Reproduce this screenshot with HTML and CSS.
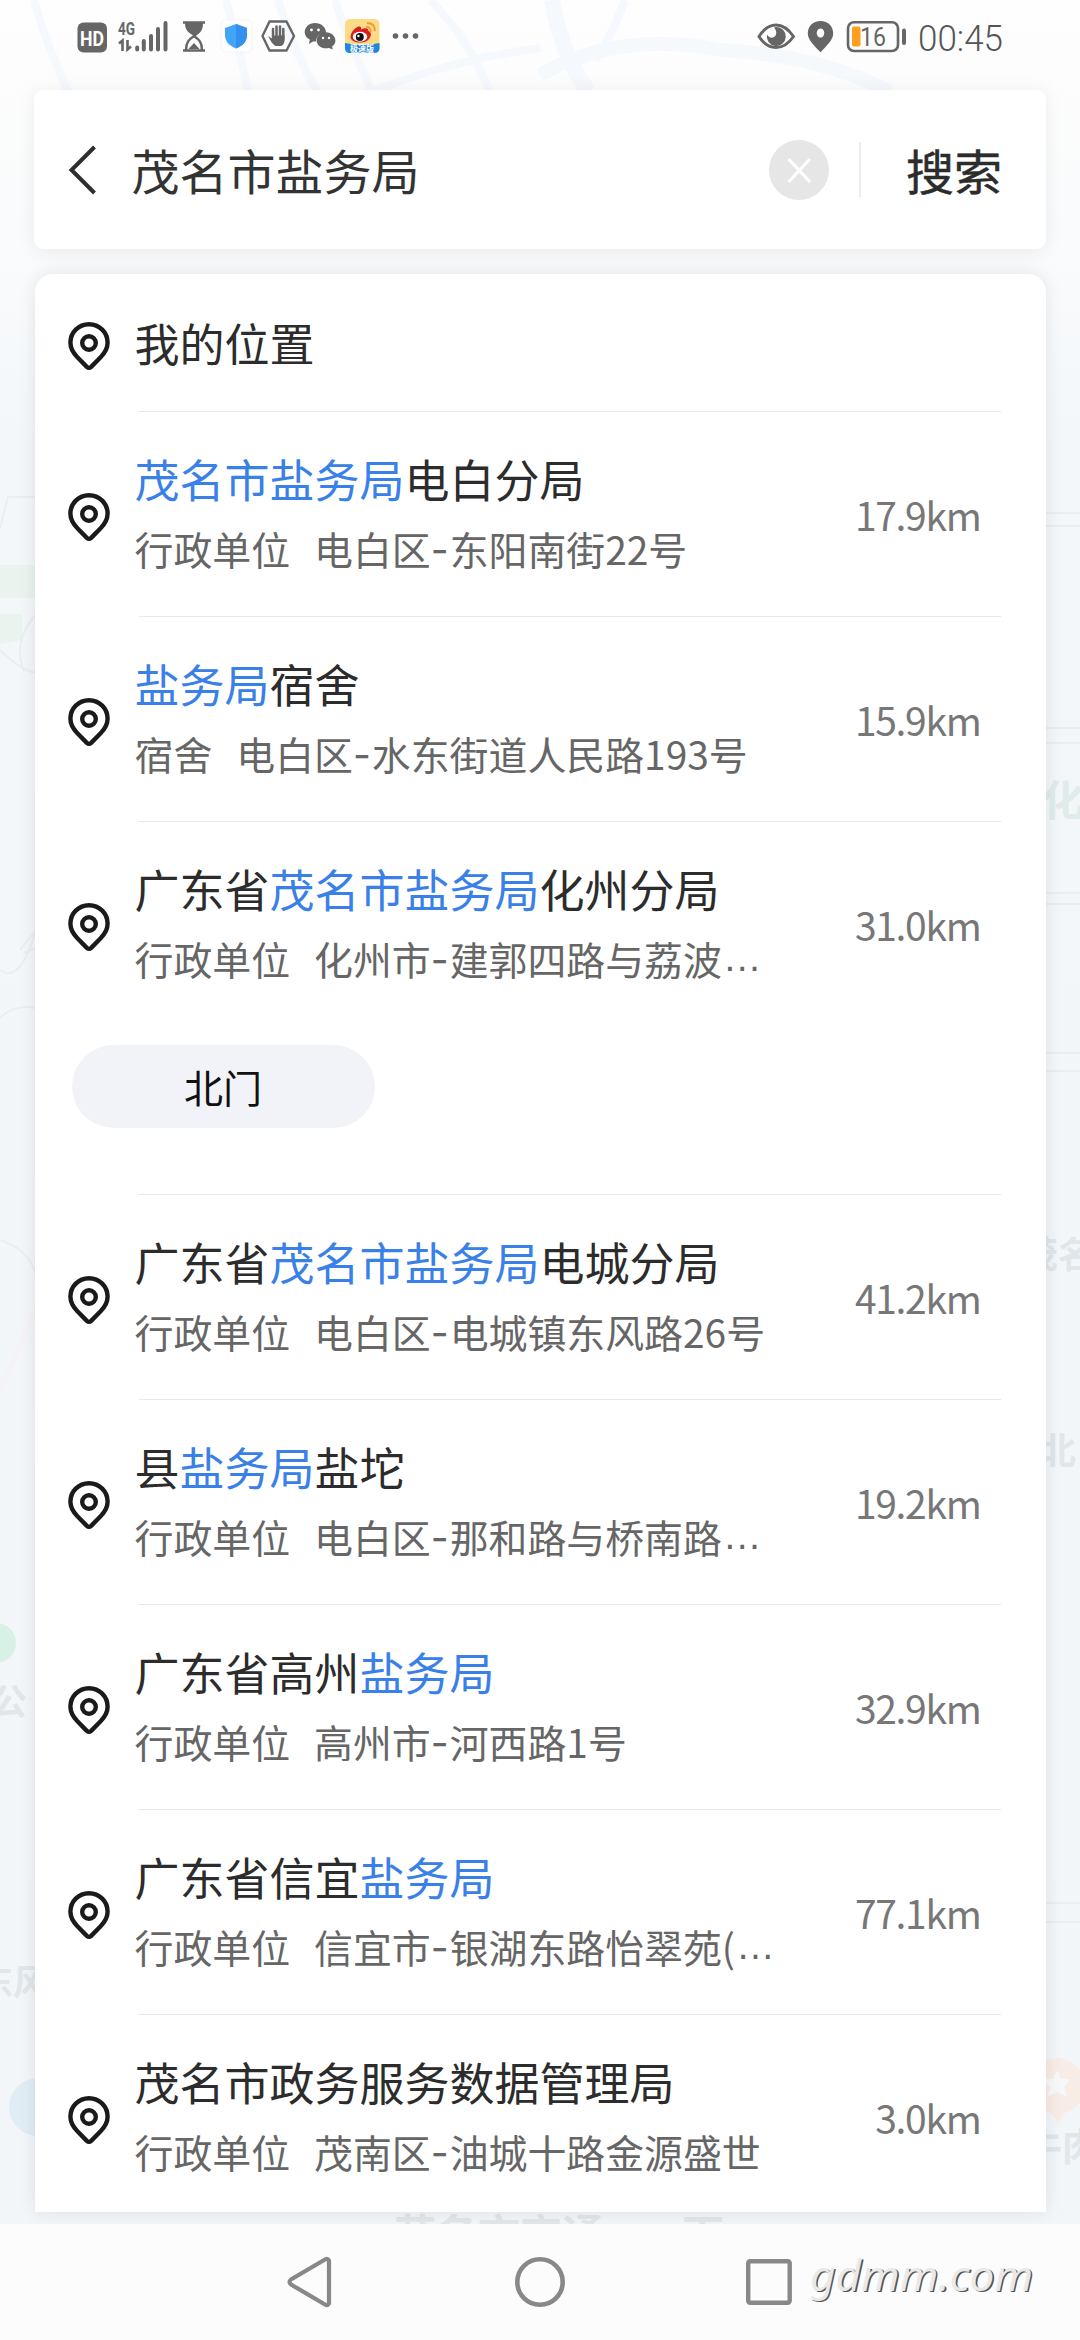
FILE: index.html
```html
<!DOCTYPE html>
<html lang="zh-CN">
<head>
<meta charset="utf-8">
<title>搜索</title>
<link rel="stylesheet" href="styles.css">
</head>
<body>
<svg width="0" height="0" class="defs">
  <symbol id="pin" viewBox="0 0 44 52">
    <path d="M22 3.200C32.500 3.200 40.600 11.400 40.600 21.600c0 6.200-2.700 10.400-7 14.600L24.200 45.800q-2.200 2-4.400 0L10.400 36.200C6.100 32 3.400 27.800 3.400 21.600 3.400 11.400 11.500 3.200 22 3.200z" fill="none" stroke="#1a1a1a" stroke-width="4.400"/>
    <circle cx="22" cy="22" r="6.800" fill="none" stroke="#1a1a1a" stroke-width="4.400"/>
  </symbol>
</svg>
<div class="screen">
  <svg class="map" viewBox="0 0 1080 2224" width="1080" height="2224">
    <defs>
      <linearGradient id="fade" x1="0" y1="0" x2="0" y2="1">
        <stop offset="0" stop-color="#fefefe"/><stop offset=".1" stop-color="#fafbfc"/><stop offset=".2" stop-color="#f3f7fa"/><stop offset="1" stop-color="#f2f6f9"/>
      </linearGradient>
    </defs>
    <rect width="1080" height="2224" fill="url(#fade)"/>
    <g fill="none" stroke="#f5f8fc" stroke-width="8">
      <path d="M34 0Q45 40 68 92"/><path d="M226 0Q240 50 248 92"/><path d="M278 0Q295 55 318 92"/><path d="M335 0Q350 45 372 92"/>
      <path d="M430 0Q470 40 490 92"/><path d="M372 92Q450 60 540 48"/>
      <path d="M540 75Q620 30 720 50Q820 55 890 92" stroke-width="14"/><path d="M552 0Q560 50 588 92" stroke-width="16"/><path d="M625 0Q610 40 595 60"/>
    </g>
    <path d="M0 565H36V598H0zM0 614H22V640L0 644z" fill="#e9f4ef"/>
    <g fill="none" stroke="#e9eef1" stroke-width="2">
      <path d="M0 528L8 497H36M0 650Q20 670 36 673M36 615Q12 640 24 672M0 970Q20 985 36 930M0 1018Q14 1004 36 1008M0 1240Q30 1250 36 1275"/>
      <path d="M20 950L36 930M24 953L36 948"/>
      <path d="M1044 513H1080M1044 526H1080M1044 728H1080M1044 743H1080M1044 893H1080M1044 904H1080M1044 1053H1080M1044 1071H1080M1044 1903H1080M1044 1922H1080"/>
    </g>
    <path d="M0 1390L36 1310" stroke="#f5f3f6" stroke-width="6"/>
    <circle cx="-4" cy="1643" r="20" fill="#d9f0e6"/>
    <circle cx="38" cy="2107" r="29" fill="#e0edf5"/>
    <circle cx="1057" cy="2086" r="28" fill="#f8ece7"/><path d="M1046 2108L1058 2122L1069 2108z" fill="#f8ece7"/>
    <path d="M1057 2070l4 9h9l-6 8 3 10-10-5-10 5 3-10-6-8h9z" fill="#f6f8fa"/>
    <g class="labels">
      <text x="-9" y="1715" font-size="36">公</text>
      <text x="-22" y="1995" font-size="35">东风</text>
      <text x="1042" y="816" font-size="42" fill="#dfece9">化</text>
      <text x="1022" y="1268" font-size="36">茂名</text>
      <text x="1040" y="1464" font-size="36">北</text>
      <text x="1024" y="2160" font-size="38">牛肉</text>
      <text x="394" y="2250" font-size="42">茂名市交通</text>
      <text x="682" y="2250" font-size="42">下</text>
    </g>
  </svg>

  <header class="status">
    <svg width="440" height="72" viewBox="0 0 440 72">
      <rect x="77.500" y="22.500" width="29.500" height="30" rx="6" fill="#666"/>
      <text x="80" y="45.500" class="s-hd" textLength="24" lengthAdjust="spacingAndGlyphs">HD</text>
      <text x="118" y="34.500" class="s-4g" textLength="17" lengthAdjust="spacingAndGlyphs">4G</text>
      <path d="M119 43.500l3.500-3V51M127.500 40v9.500l3.500-3" fill="none" stroke="#666" stroke-width="2.600"/>
      <path d="M137.200 47.500V49.500M143.800 41V49.500M151 36V49.500M158 29V49.500M165.500 23V49.500" stroke="#666" stroke-width="4" stroke-linecap="round"/>
      <path d="M183 22.500h22M183 50.500h22" stroke="#666" stroke-width="2.600"/>
      <path d="M185 23h18c0 8-3 10-8 13.500C189 33 185 31 185 23z" fill="#666"/>
      <path d="M186 50c0-8 3-10.500 8-14 5 3.500 8 6 8 14" fill="none" stroke="#666" stroke-width="2.400"/>
      <path d="M188.500 49l5.500-6 5.500 6z" fill="#666"/>
      <rect x="221" y="20" width="31" height="32" rx="5" fill="#fff" stroke="#f3f3f3"/>
      <path d="M236 24l11 4v7c0 7-5 11-11 13.500C230 46 225 42 225 35v-7z" fill="#43a5f8"/><path d="M236 24l11 4v7c0 7-5 11-11 13.500z" fill="#3390ee"/>
      <path d="M269.500 21.500h17l7.500 14.500-7.500 14.500h-17L262.500 36z" fill="none" stroke="#666" stroke-width="2.400" stroke-linejoin="round"/>
      <path d="M273 29v8M276.500 26.500v10M280 26.500v10M283.300 29v10" stroke="#666" stroke-width="2.500" stroke-linecap="round"/>
      <path d="M268 36l4 2.500v-3h12.600v4c0 4-2 6.500-4 6.500h-5c-2.500-1-5.500-6-7.600-10z" fill="#666"/>
      <path d="M315 23c6 0 11 4.300 11 9.200 0 .3 0 .5-.1.800-6 0-10 4-10 8.400h-3L309 44l.8-4.500C306.500 38 304.700 35 304.700 32.200 304.700 27.300 309 23 315 23z" fill="#666"/>
      <path d="M326 32.200c5.300 0 9.400 3.700 9.400 8.200 0 2.500-1.300 4.500-3.200 6l.5 3-3.600-1.500c-1 .3-2 .4-3.100.4-5.300 0-9.400-3.500-9.400-7.900s4.100-8.200 9.400-8.200z" fill="#666"/>
      <g fill="#fff"><circle cx="311.500" cy="30" r="1.400"/><circle cx="318.500" cy="30" r="1.400"/><circle cx="323" cy="38" r="1.200"/><circle cx="329" cy="38" r="1.200"/></g>
      <rect x="345" y="19" width="34.500" height="34" rx="5" fill="#fbdb85"/>
      <path d="M345 43q17 4 34.500 0v5q0 5-5 5H350q-5 0-5-5z" fill="#1f86e0"/>
      <path d="M350.500 37c0-5 5-9.500 8-10.500 2.500-.5 3 1 2.500 3 4-2 7.500-2 7.500 1.500 3 1.500 3 4 1.500 6.500-2 4-6 5-10 5-5 0-9.500-2-9.500-5.500z" fill="#d81e1e"/>
      <ellipse cx="360" cy="36.800" rx="7.200" ry="5" fill="#fff"/><circle cx="359.800" cy="37" r="4" fill="#111"/><circle cx="358.400" cy="36" r="1.200" fill="#fff"/>
      <path d="M366 27q4-1 5 5M367 23q8 0 8 8" fill="none" stroke="#ee9c35" stroke-width="1.800"/>
      <text x="350" y="51.500" class="s-app" textLength="24" lengthAdjust="spacingAndGlyphs">极速版</text>
      <g fill="#666"><circle cx="395.500" cy="36" r="2.800"/><circle cx="405.500" cy="36" r="2.800"/><circle cx="415.500" cy="36" r="2.800"/></g>
    </svg>
    <svg width="330" height="72" viewBox="750 0 330 72">
      <path d="M759 36.500C764 28.500 770 25 776 25s12 3.500 17.500 11.500C788 44.500 782 47.500 776 47.500S764 44.500 759 36.500z" fill="none" stroke="#666" stroke-width="3"/>
      <path d="M776 27a9.500 9.500 0 1 1-9 7.500c1.500 3 4.500 4 7 2.500 3-2 3-6 0-9.500q1-.5 2-.5z" fill="#666"/>
      <path d="M820.500 21c7.500 0 12.700 5.400 12.700 12.300 0 7.200-7 12.700-12.700 19-5.700-6.300-12.700-11.800-12.700-19C807.800 26.400 813 21 820.500 21zM820.500 28.500a3.800 4.500 0 1 0 .01 0z" fill="#666" fill-rule="evenodd"/>
      <rect x="848" y="22.200" width="50" height="28.800" rx="6" fill="none" stroke="#666" stroke-width="2.600"/>
      <rect x="852" y="26.500" width="8.500" height="20" rx="2" fill="#ff9d1c"/>
      <text x="860" y="46" class="s-bat" textLength="26" lengthAdjust="spacingAndGlyphs">16</text>
      <rect x="902" y="28.500" width="4" height="16.500" rx="2" fill="#666"/>
      <text x="918" y="50.500" class="s-time" textLength="85" lengthAdjust="spacingAndGlyphs">00:45</text>
    </svg>
  </header>

  <div class="search">
    <svg class="back" width="30" height="52" viewBox="0 0 30 52"><path d="M26.500 3L3.500 26l23 23" fill="none" stroke="#2e2e2e" stroke-width="4"/></svg>
    <div class="query">茂名市盐务局</div>
    <svg class="clear" width="60" height="60" viewBox="0 0 60 60"><circle cx="30" cy="30" r="30" fill="#e6e6e6"/><path d="M19.500 19l21.500 23M41 19L19.500 42" stroke="#fff" stroke-width="3.200"/></svg>
    <i class="sep"></i>
    <div class="go">搜索</div>
  </div>

  <main class="list">
    <section class="row first"><svg class="pin"><use href="#pin"/></svg><div class="info"><div class="name">我的位置</div></div></section>
    <section class="row"><svg class="pin"><use href="#pin"/></svg><div class="info"><div class="name"><b>茂名市盐务局</b>电白分局</div><div class="addr"><span class="kind">行政单位</span>电白区<i>-</i>东阳南街22号</div></div><div class="dist">17.9km</div></section>
    <section class="row"><svg class="pin"><use href="#pin"/></svg><div class="info"><div class="name"><b>盐务局</b>宿舍</div><div class="addr"><span class="kind">宿舍</span>电白区<i>-</i>水东街道人民路193号</div></div><div class="dist">15.9km</div></section>
    <section class="row"><svg class="pin"><use href="#pin"/></svg><div class="info"><div class="name">广东省<b>茂名市盐务局</b>化州分局</div><div class="addr"><span class="kind">行政单位</span>化州市<i>-</i>建郭四路与荔波<em>…</em></div></div><div class="dist">31.0km</div></section>
    <div class="chips"><span class="chip">北门</span></div>
    <section class="row"><svg class="pin"><use href="#pin"/></svg><div class="info"><div class="name">广东省<b>茂名市盐务局</b>电城分局</div><div class="addr"><span class="kind">行政单位</span>电白区<i>-</i>电城镇东风路26号</div></div><div class="dist">41.2km</div></section>
    <section class="row"><svg class="pin"><use href="#pin"/></svg><div class="info"><div class="name">县<b>盐务局</b>盐坨</div><div class="addr"><span class="kind">行政单位</span>电白区<i>-</i>那和路与桥南路<em>…</em></div></div><div class="dist">19.2km</div></section>
    <section class="row"><svg class="pin"><use href="#pin"/></svg><div class="info"><div class="name">广东省高州<b>盐务局</b></div><div class="addr"><span class="kind">行政单位</span>高州市<i>-</i>河西路1号</div></div><div class="dist">32.9km</div></section>
    <section class="row"><svg class="pin"><use href="#pin"/></svg><div class="info"><div class="name">广东省信宜<b>盐务局</b></div><div class="addr"><span class="kind">行政单位</span>信宜市<i>-</i>银湖东路怡翠苑(<em>…</em></div></div><div class="dist">77.1km</div></section>
    <section class="row"><svg class="pin"><use href="#pin"/></svg><div class="info"><div class="name">茂名市政务服务数据管理局</div><div class="addr"><span class="kind">行政单位</span>茂南区<i>-</i>油城十路金源盛世</div></div><div class="dist">3.0km</div></section>
  </main>

  <footer class="nav">
    <svg width="50" height="56" viewBox="0 0 50 56"><path d="M44 6.500v43q-1.500 2.500-4 1L6 30.500q-3-2.500 0-5L40 5.500q2.500-1.500 4 1z" fill="none" stroke="#888" stroke-width="4.200"/></svg>
    <svg width="50" height="50" viewBox="0 0 50 50"><circle cx="25" cy="25" r="22.700" fill="none" stroke="#888" stroke-width="4.600"/></svg>
    <svg width="46" height="46" viewBox="0 0 46 46"><rect x="2.200" y="2.200" width="41.500" height="41.500" rx="2" fill="none" stroke="#888" stroke-width="4.400"/></svg>
    <svg class="mark" width="250" height="60" viewBox="0 0 250 60"><text x="18" y="38.500" textLength="223" lengthAdjust="spacingAndGlyphs">gdmm.com</text></svg>
  </footer>
</div>
</body>
</html>
```

FILE: styles.css
```css
* { box-sizing: border-box; }
html, body { margin: 0; }
body {
  width: 1080px;
  height: 2340px;
  overflow: hidden;
  background: #fcfcfc;
  font-family: "Noto Sans CJK SC", sans-serif;
  color: #2c2c2c;
}
.defs { position: absolute; }
.screen {
  position: relative;
  display: flex;
  flex-direction: column;
  height: 2340px;
}
.map { position: absolute; left: 0; top: 0; }
.labels { fill: #e1e6ea; font-weight: 700; }
.status, .search, .list, .nav { position: relative; }

.status {
  display: flex;
  justify-content: space-between;
  height: 90px;
}
.s-hd { font: 700 21px Roboto, sans-serif; fill: #fff; }
.s-4g { font: 700 18px Roboto, sans-serif; fill: #666; }
.s-app { font: 700 9px "Noto Sans CJK SC", sans-serif; fill: #fff; }
.s-bat { font: 400 25px Roboto, sans-serif; fill: #666; }
.s-time { font: 300 36px Roboto, sans-serif; fill: #555; }

.search {
  display: flex;
  align-items: center;
  height: 159px;
  margin: 0 34px;
  padding: 0 44px 0 34px;
  background: #fff;
  border-radius: 9px;
  box-shadow: 0 2px 20px rgba(0, 0, 0, .07);
}
.query {
  flex: 1;
  margin: -2px 0 0 33.500px;
  font-size: 48px;
  color: #333;
}
.sep {
  width: 2px;
  height: 55px;
  margin: 0 45px 0 30px;
  background: #ededed;
}
.go {
  margin-top: -2px;
  font-size: 48px;
  -webkit-text-stroke: .5px #2c2c2c;
}

.list {
  flex: none;
  height: 1938px;
  margin: 25px 34.500px 0;
  overflow: hidden;
  background: #fff;
  border-radius: 18px 18px 0 0;
  box-shadow: 0 0 18px rgba(0, 0, 0, .09);
}
.row {
  position: relative;
  display: flex;
  align-items: center;
  height: 205px;
  padding: 0 65px 0 32px;
}
.row.first { height: 137px; }
.row + .row::before, .chips + .row::before {
  content: "";
  position: absolute;
  top: 0;
  left: 104px;
  right: 45px;
  height: 1px;
  background: #e8e8e8;
}
.pin {
  flex: none;
  width: 44px;
  height: 52px;
  margin: 9px 24px 0 0;
}
.info {
  flex: 1;
  white-space: nowrap;
}
.name {
  height: 66px;
  line-height: 66px;
  font-size: 45px;
}
.name b { font-weight: 400; color: #3a80e9; }
.addr {
  display: flex;
  height: 70px;
  line-height: 72px;
  font-size: 38.900px;
  color: #666;
}
.kind { margin-right: 24px; }
.addr i {
  padding: 2px 1px 0 0;
  font-family: Inter, sans-serif;
  font-style: normal;
}
.addr em {
  padding-left: 1px;
  font-family: "Liberation Sans", sans-serif;
  font-style: normal;
}
.dist {
  font-size: 39px;
  letter-spacing: -1.300px;
  color: #777;
}
.chips {
  height: 168px;
  padding: 19px 0 0 37px;
}
.chip {
  display: block;
  width: 303px;
  height: 83px;
  border-radius: 42px;
  background: #f1f3f8;
  line-height: 83px;
  text-align: center;
  font-size: 39px;
  color: #111;
}

.nav {
  display: flex;
  align-items: center;
  height: 116px;
  margin-top: 12px;
  padding-left: 285px;
  background: #fcfcfc;
}
.nav svg:nth-child(2) { margin-left: 180px; }
.nav svg:nth-child(3) { margin-left: 181px; }
.mark text {
  font: italic 400 41px "Noto Sans", sans-serif;
  fill: #e9e9e9;
  text-shadow: 1.500px 1.500px 0 #555;
}
```
